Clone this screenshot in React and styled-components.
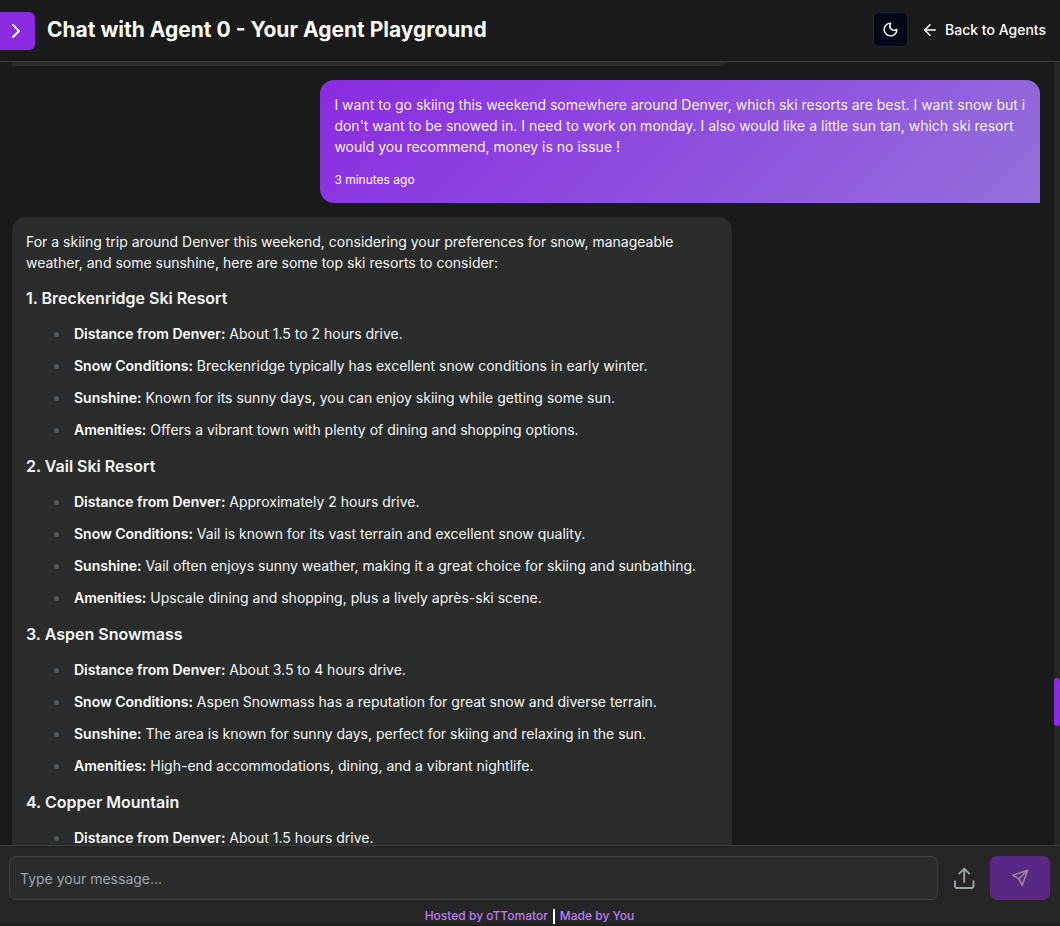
import React from "react";
import styled, { createGlobalStyle } from "styled-components";
import { ArrowLeft, ChevronRight, Moon } from "lucide-react";

const GlobalStyle = createGlobalStyle`
  * { box-sizing: border-box; }
  body {
    margin: 0;
    background: #1a1a1a;
    color: #f8fafc;
    font: 14px/21px Inter, "Liberation Sans", sans-serif;
  }
  button, input { font: inherit; }
`;

const Page = styled.div`
  display: flex;
  flex-direction: column;
  height: 100vh;
  overflow: hidden;
`;

const Header = styled.header`
  display: flex;
  align-items: flex-start;
  gap: 12px;
  flex: none;
  padding: 12px 14px 11px 0;
  border-bottom: 1px solid #333f48;
`;

const SidebarToggle = styled.button`
  display: flex;
  align-items: center;
  justify-content: center;
  width: 35px;
  height: 38px;
  padding: 0 4px 0 0;
  border: 0;
  border-radius: 0 6px 6px 0;
  background: #8a2be2;
  color: #fff;
`;

const Title = styled.h1`
  flex: 1;
  margin: 0;
  font-size: 21px;
  font-weight: 700;
  line-height: 35px;
  color: #fff;
`;

const HeaderActions = styled.div`
  display: flex;
  align-items: center;
  gap: 13px;
`;

const ThemeButton = styled.button`
  display: flex;
  align-items: center;
  justify-content: center;
  width: 35px;
  height: 35px;
  padding: 0;
  border: 1px solid #1c2533;
  border-radius: 5px;
  background: #020817;
  color: #fff;
`;

const BackLink = styled.a`
  display: flex;
  align-items: center;
  gap: 6px;
  font-weight: 500;
  color: #fff;
  text-decoration: none;
`;

const Main = styled.main`
  display: flex;
  flex: 1;
  min-height: 0;
`;

const Thread = styled.div`
  display: flex;
  flex-direction: column;
  flex: 1;
  gap: 14px;
  min-width: 0;
  padding: 0 14px 0 12px;
  overflow: hidden;
`;

const Bubble = styled.article`
  flex: none;
  align-self: ${(p) => (p.$mine ? "flex-end" : "flex-start")};
  width: 70%;
  padding: 14px;
  border-radius: ${(p) => (p.$mine ? "14px 14px 0 14px" : "14px 14px 14px 0")};
  background: ${(p) =>
    p.$mine ? "linear-gradient(135deg, #8a2be2, #9370db)" : "#2a2c2b"};
  color: ${(p) => (p.$mine ? "#f6f0fd" : "#f5f6f7")};
`;

const EarlierBubble = styled(Bubble)`
  height: 42px;
  margin-top: -38px;
`;

const Text = styled.p`
  margin: 0 0 14px;
`;

const Time = styled.time`
  display: block;
  font-size: 12px;
  line-height: 18px;
  color: #fff;
`;

const ResortName = styled.h3`
  margin: 0 0 14px;
  font-size: 16px;
  font-weight: 600;
  line-height: 22px;
`;

const Facts = styled.ul`
  display: flex;
  flex-direction: column;
  gap: 11px;
  margin: 0 0 15px;
  padding: 0 0 0 48px;
  list-style: none;
`;

const Fact = styled.li`
  position: relative;

  &::before {
    content: "";
    position: absolute;
    left: -20px;
    top: 9px;
    width: 5px;
    height: 5px;
    border-radius: 50%;
    background: #4b5563;
  }

  strong {
    font-weight: 600;
    color: #fff;
  }
`;

const Rail = styled.div`
  display: flex;
  flex-direction: column;
  flex: none;
  width: 6px;
  background: #252525;
`;

const RailSpace = styled.div`
  flex: ${(p) => p.$share};
`;

const Thumb = styled.div`
  flex: 48;
  border-radius: 3px;
  background: #8a2be2;
`;

const Footer = styled.footer`
  flex: none;
  padding: 10px 10px 0 9px;
  border-top: 1px solid #3a3a3a;
  border-bottom: 1px solid #1d1a1c;
  background: #252525;
`;

const Composer = styled.form`
  display: flex;
  align-items: center;
`;

const MessageInput = styled.input`
  flex: 1;
  min-width: 0;
  height: 44px;
  padding: 0 10px;
  border: 1px solid #3f4241;
  border-radius: 7px;
  outline: 0;
  background: #2a2c2b;
  color: #fff;

  &::placeholder {
    color: #9ca3af;
    opacity: 1;
  }
`;

const UploadButton = styled.button`
  display: flex;
  align-items: center;
  justify-content: center;
  width: 52px;
  height: 44px;
  padding: 0;
  border: 0;
  background: none;
  color: #9ca3a8;
`;

const SendButton = styled.button`
  display: flex;
  align-items: center;
  justify-content: center;
  width: 60px;
  height: 44px;
  padding: 0;
  border: 0;
  border-radius: 7px;
  background: #582884;
  color: #a08a9c;
`;

const Credits = styled.nav`
  display: flex;
  align-items: center;
  justify-content: center;
  gap: 5px;
  padding: 8px 0 1px;
  font-size: 12px;
  font-weight: 500;
  line-height: 16px;
`;

const CreditLink = styled.a`
  color: #c07af5;
  text-decoration: none;
`;

const Divider = styled.span`
  width: 2px;
  height: 15px;
  background: #fff;
`;

const resorts = [
  {
    name: "1. Breckenridge Ski Resort",
    facts: [
      ["Distance from Denver:", "About 1.5 to 2 hours drive."],
      ["Snow Conditions:", "Breckenridge typically has excellent snow conditions in early winter."],
      ["Sunshine:", "Known for its sunny days, you can enjoy skiing while getting some sun."],
      ["Amenities:", "Offers a vibrant town with plenty of dining and shopping options."],
    ],
  },
  {
    name: "2. Vail Ski Resort",
    facts: [
      ["Distance from Denver:", "Approximately 2 hours drive."],
      ["Snow Conditions:", "Vail is known for its vast terrain and excellent snow quality."],
      ["Sunshine:", "Vail often enjoys sunny weather, making it a great choice for skiing and sunbathing."],
      ["Amenities:", "Upscale dining and shopping, plus a lively après-ski scene."],
    ],
  },
  {
    name: "3. Aspen Snowmass",
    facts: [
      ["Distance from Denver:", "About 3.5 to 4 hours drive."],
      ["Snow Conditions:", "Aspen Snowmass has a reputation for great snow and diverse terrain."],
      ["Sunshine:", "The area is known for sunny days, perfect for skiing and relaxing in the sun."],
      ["Amenities:", "High-end accommodations, dining, and a vibrant nightlife."],
    ],
  },
  {
    name: "4. Copper Mountain",
    facts: [["Distance from Denver:", "About 1.5 hours drive."]],
  },
];

function UploadIcon() {
  return (
    <svg width="22" height="22" viewBox="0 0 22 22" fill="none" stroke="currentColor" strokeWidth="1.9" strokeLinecap="round" strokeLinejoin="round" aria-hidden="true">
      <path d="M2 14.2v5a1.8 1.8 0 0 0 1.8 1.8h14.9a1.8 1.8 0 0 0 1.8-1.8v-5" />
      <path d="M11.2 14.9V2M6.2 6.6l5-4.8 5 4.8" />
    </svg>
  );
}

function SendIcon() {
  return (
    <svg width="18" height="18" viewBox="0 0 18 18" fill="none" stroke="currentColor" strokeWidth="1.5" strokeLinejoin="round" aria-hidden="true">
      <path d="M16.6 1.2 1.7 6.4l6.3 3.4 3.2 6.5z" />
      <path d="M16.6 1.2 8 9.8" />
    </svg>
  );
}

export default function App() {
  return (
    <Page>
      <GlobalStyle />
      <Header>
        <SidebarToggle type="button" aria-label="Open sidebar">
          <ChevronRight size={24} strokeWidth={2} />
        </SidebarToggle>
        <Title>Chat with Agent 0 - Your Agent Playground</Title>
        <HeaderActions>
          <ThemeButton type="button" aria-label="Toggle theme">
            <Moon size={17} strokeWidth={2} />
          </ThemeButton>
          <BackLink href="#agents">
            <ArrowLeft size={18} strokeWidth={2} />
            Back to Agents
          </BackLink>
        </HeaderActions>
      </Header>

      <Main>
        <Thread>
          <EarlierBubble />
          <Bubble $mine>
            <Text>
              I want to go skiing this weekend somewhere around Denver, which ski
              resorts are best. I want snow but i don't want to be snowed in. I
              need to work on monday. I also would like a little sun tan, which
              ski resort would you recommend, money is no issue !
            </Text>
            <Time>3 minutes ago</Time>
          </Bubble>
          <Bubble>
            <Text>
              For a skiing trip around Denver this weekend, considering your
              preferences for snow, manageable weather, and some sunshine, here
              are some top ski resorts to consider:
            </Text>
            {resorts.map((resort) => (
              <React.Fragment key={resort.name}>
                <ResortName>{resort.name}</ResortName>
                <Facts>
                  {resort.facts.map(([label, value]) => (
                    <Fact key={label}>
                      <strong>{label}</strong> {value}
                    </Fact>
                  ))}
                </Facts>
              </React.Fragment>
            ))}
          </Bubble>
        </Thread>
        <Rail aria-hidden="true">
          <RailSpace $share={616} />
          <Thumb />
          <RailSpace $share={119} />
        </Rail>
      </Main>

      <Footer>
        <Composer onSubmit={(e) => e.preventDefault()}>
          <MessageInput type="text" aria-label="Message" placeholder="Type your message..." />
          <UploadButton type="button" aria-label="Upload file">
            <UploadIcon />
          </UploadButton>
          <SendButton type="submit" aria-label="Send message">
            <SendIcon />
          </SendButton>
        </Composer>
        <Credits>
          <CreditLink href="#ottomator">Hosted by oTTomator</CreditLink>
          <Divider />
          <CreditLink href="#you">Made by You</CreditLink>
        </Credits>
      </Footer>
    </Page>
  );
}
